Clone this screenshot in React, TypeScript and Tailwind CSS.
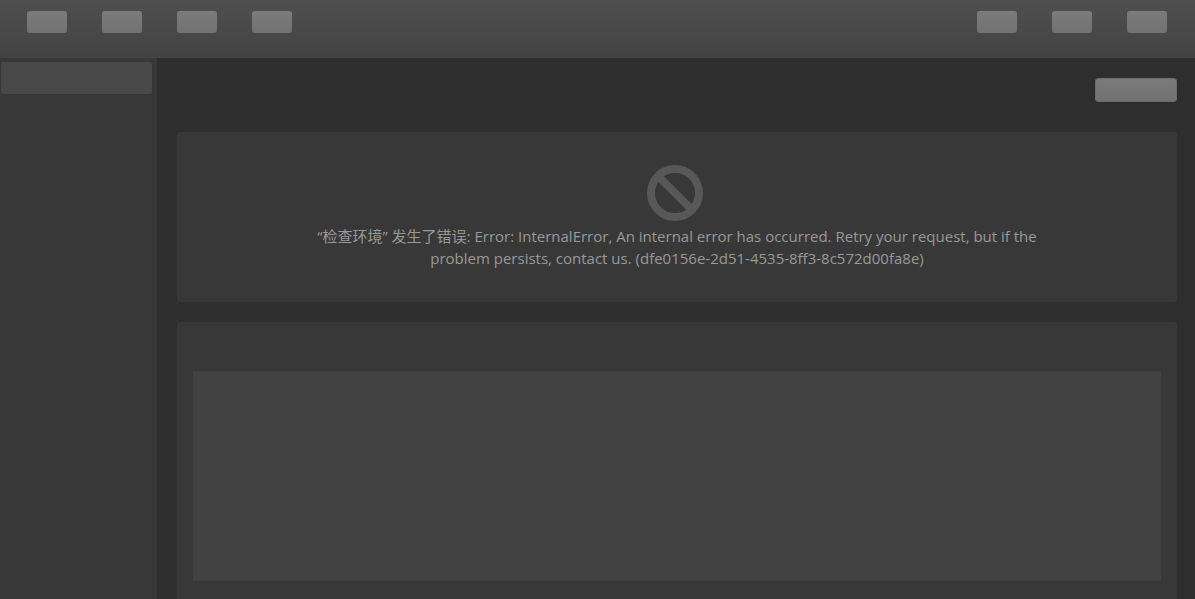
import { FC } from 'react';

interface PlaceholderButtonProps {
    label: string;
    className: string;
}

const leftTools = ['Back', 'Forward', 'Refresh', 'New'];
const rightTools = ['Search', 'Settings', 'Account'];

const PlaceholderButton: FC<PlaceholderButtonProps> = ({ label, className }) => (
    <button
        type="button"
        aria-label={label}
        className={`block rounded-[3px] bg-linear-to-b from-[#7b7b7b] to-[#727272] ${className}`}
    />
);

const ErrorIcon: FC = () => (
    <svg className="h-[61px] w-[60px]" viewBox="0 0 60 61" fill="none" stroke="#585858" strokeWidth="8" aria-hidden="true">
        <circle cx="28" cy="29" r="24" />
        <path d="M11 12 45 46" />
    </svg>
);

const Toolbar: FC = () => (
    <header className="flex h-[58px] shrink-0 items-start justify-between bg-linear-to-b from-[#4f4f4f] to-[#434343] pt-[11px] pr-7 pl-[27px]">
        <div className="flex gap-[35px]">
            {leftTools.map((tool) => (
                <PlaceholderButton key={tool} label={tool} className="h-[22px] w-10" />
            ))}
        </div>
        <div className="flex gap-[35px]">
            {rightTools.map((tool) => (
                <PlaceholderButton key={tool} label={tool} className="h-[22px] w-10" />
            ))}
        </div>
    </header>
);

const App: FC = () => {
    return (
        <div className="flex h-screen flex-col overflow-hidden bg-[#2e2e2e] font-['Open_Sans','Noto_Sans_CJK_SC',sans-serif]">
            <Toolbar />
            <div className="flex min-h-0 flex-1">
                <nav className="w-[157px] shrink-0 bg-[#383838] pt-1 pr-[5px] pl-px">
                    <button type="button" aria-label="Overview" className="block h-8 w-full rounded-xs bg-[#484848]" />
                </nav>
                <main className="flex min-w-0 flex-1 flex-col pt-5 pr-[18px] pl-5">
                    <div className="mb-[30px] flex justify-end">
                        <PlaceholderButton label="Action" className="h-6 w-[82px] border border-[#6b6b6b]" />
                    </div>
                    <section className="mb-5 flex flex-col items-center rounded-[3px] bg-[#383838] px-8 pt-8 pb-[33px]">
                        <ErrorIcon />
                        <p role="alert" className="max-w-[750px] text-center text-[15px] leading-[22px] text-[#999999]">
                            “检查环境” 发生了错误: Error: InternalError, An internal error has occurred. Retry your request, but if
                            the problem persists, contact us. (dfe0156e-2d51-4535-8ff3-8c572d00fa8e)
                        </p>
                    </section>
                    <section className="flex-1 rounded-t-[3px] bg-[#383838] px-4 pt-[49px]">
                        <div className="h-[210px] bg-[#424242]" />
                    </section>
                </main>
            </div>
        </div>
    );
};

export default App;
